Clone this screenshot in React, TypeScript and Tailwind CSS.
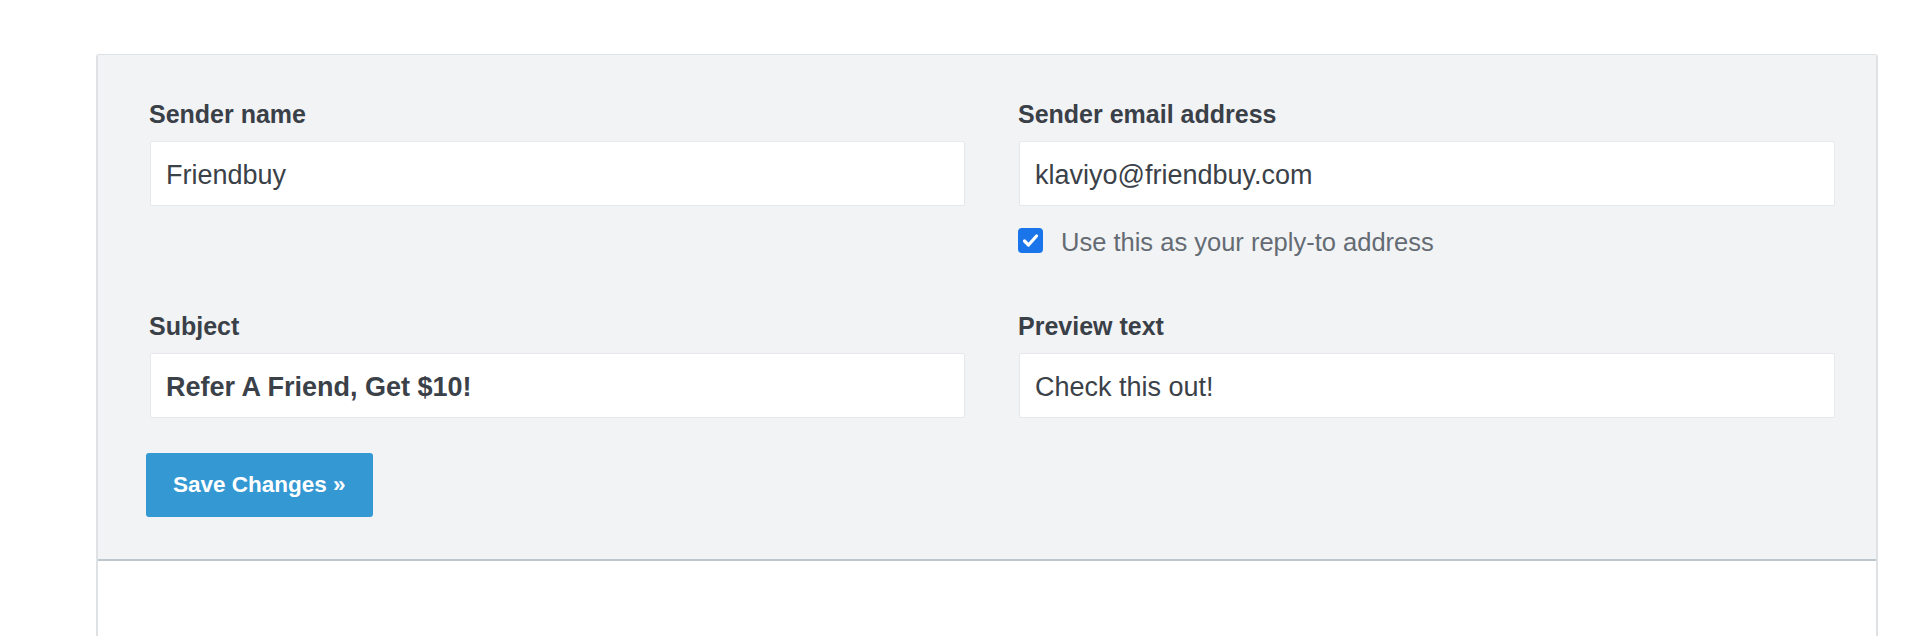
import React, { useState } from 'react';

const font = { fontFamily: '"Liberation Sans", Arial, sans-serif' };

function Field({
  label,
  value,
  bold,
  children,
}: {
  label: string;
  value: string;
  bold?: boolean;
  children?: React.ReactNode;
}) {
  return (
    <div className="flex flex-col">
      <label className="ml-[-1px] text-[25px] leading-[32px] font-bold text-[#3a4048]">{label}</label>
      <input
        readOnly
        value={value}
        className={`mt-[11px] h-[65px] w-full rounded-[2px] border border-[#e6e8eb] bg-white pl-[15px] pr-4 pt-[4px] text-[27px] text-[#3b4148] outline-none ${
          bold ? 'font-bold' : 'font-normal'
        }`}
        style={font}
      />
      {children}
    </div>
  );
}

export default function App() {
  const [replyTo, setReplyTo] = useState(true);

  return (
    <div className="min-h-[636px] bg-white pt-[54px]" style={font}>
      <div className="ml-[96px] w-[1782px] rounded-t-[3px] border-x-2 border-t border-[#dfe2e5]">
        <div className="border-b-2 border-[#bcc6cd] bg-[#f2f3f5] pt-[43px] pb-[42px] pl-[52px] pr-[40px]">
          <div className="grid grid-cols-[815px_816px] gap-x-[54px]">
            <Field label="Sender name" value="Friendbuy" />
            <Field label="Sender email address" value="klaviyo@friendbuy.com">
              <label className="mt-[22px] ml-[-1px] flex cursor-pointer items-start gap-[18px]">
                <button
                  type="button"
                  onClick={() => setReplyTo(!replyTo)}
                  className={`flex h-[25px] w-[25px] shrink-0 items-center justify-center rounded-[4px] ${
                    replyTo ? 'bg-[#1a74ea]' : 'border-2 border-[#767676] bg-white'
                  }`}
                >
                  {replyTo && (
                    <svg width="19" height="19" viewBox="0 0 19 19" fill="none">
                      <path d="M3.5 10l4 4L15.5 5" stroke="white" strokeWidth="3.2" strokeLinecap="round" strokeLinejoin="round" />
                    </svg>
                  )}
                </button>
                <span className="pt-[2px] text-[25.5px] leading-[25px] text-[#646b73]">
                  Use this as your reply-to address
                </span>
              </label>
            </Field>
          </div>

          <div className="mt-[55px] grid grid-cols-[815px_816px] gap-x-[54px]">
            <Field label="Subject" value="Refer A Friend, Get $10!" bold />
            <Field label="Preview text" value="Check this out!" />
          </div>

          <button
            type="button"
            className="mt-[35px] ml-[-4px] h-[64px] rounded-[3px] bg-[#3498d3] px-[27px] text-[22.5px] font-bold text-white"
          >
            Save Changes »
          </button>
        </div>
        <div className="h-[80px] bg-white" />
      </div>
    </div>
  );
}
